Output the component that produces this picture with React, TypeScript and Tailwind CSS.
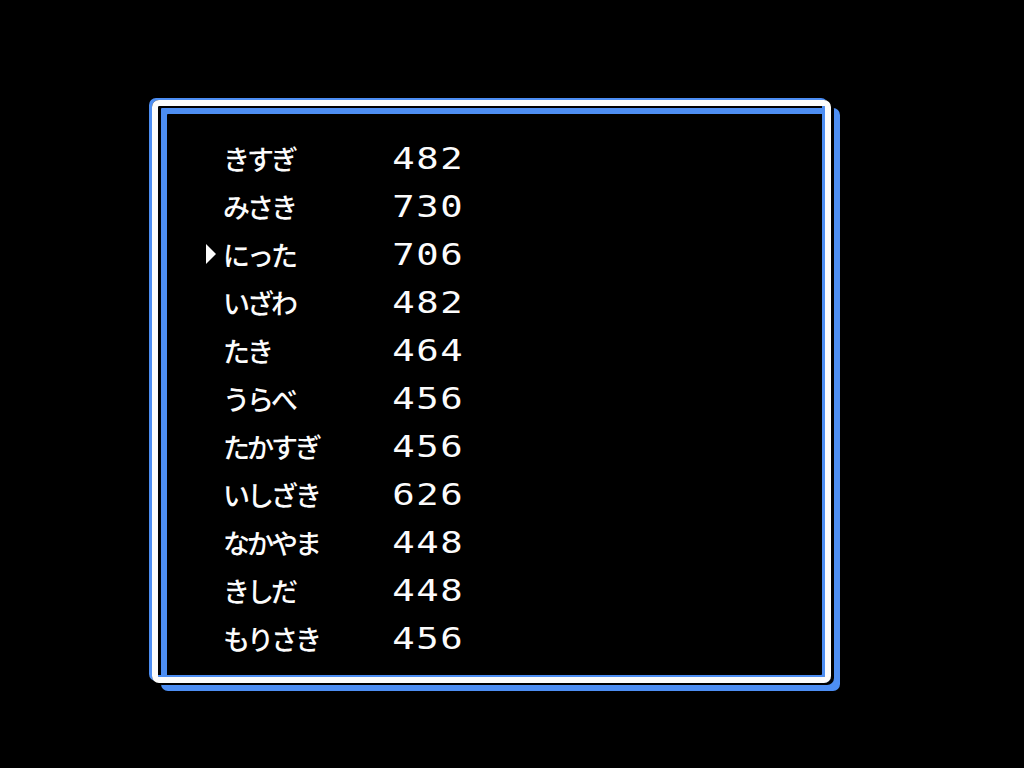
import React from "react";

type Entry = { name: string; score: string };

const entries: Entry[] = [
  { name: "きすぎ", score: "482" },
  { name: "みさき", score: "730" },
  { name: "にった", score: "706" },
  { name: "いざわ", score: "482" },
  { name: "たき", score: "464" },
  { name: "うらべ", score: "456" },
  { name: "たかすぎ", score: "456" },
  { name: "いしざき", score: "626" },
  { name: "なかやま", score: "448" },
  { name: "きしだ", score: "448" },
  { name: "もりさき", score: "456" },
];

const SELECTED = 2;

function Score({ value }: { value: string }) {
  return (
    <div className="flex">
      {value.split("").map((d, i) => (
        <span
          key={i}
          className="inline-flex w-[24px] justify-center text-[31px] leading-none text-[#fcfcfc] [font-family:'DejaVu_Sans_Mono',monospace]"
        >
          <span className="inline-block scale-x-[1.2]">{d}</span>
        </span>
      ))}
    </div>
  );
}

export default function App() {
  return (
    <div className="w-[1024px] h-[768px] bg-black pt-[100px] pl-[152px] overflow-hidden">
      <div className="w-[679px] h-[583px] rounded-[7px] border-[6px] border-[#fcfcfc] shadow-[-3px_-2px_0_0_#4d8ef3,3px_2px_0_0_#000,9px_8px_0_0_#4d8ef3,inset_-3px_-2px_0_0_#4d8ef3,inset_3px_2px_0_0_#000,inset_9px_8px_0_0_#4d8ef3] pt-[28px] pl-[44px]">
        <div className="flex flex-col">
          {entries.map((e, i) => (
            <div key={i} className="flex h-[48px] items-center">
              <div className="flex w-[21px] items-center">
                {i === SELECTED && (
                  <span className="ml-[4px] h-0 w-0 border-y-[10px] border-l-[10px] border-y-transparent border-l-[#fcfcfc]" />
                )}
              </div>
              <div className="w-[168px] text-[27px] font-medium leading-none tracking-[-3px] text-[#fcfcfc] [font-family:'Noto_Sans_CJK_JP',sans-serif]">
                {e.name}
              </div>
              <Score value={e.score} />
            </div>
          ))}
        </div>
      </div>
    </div>
  );
}
